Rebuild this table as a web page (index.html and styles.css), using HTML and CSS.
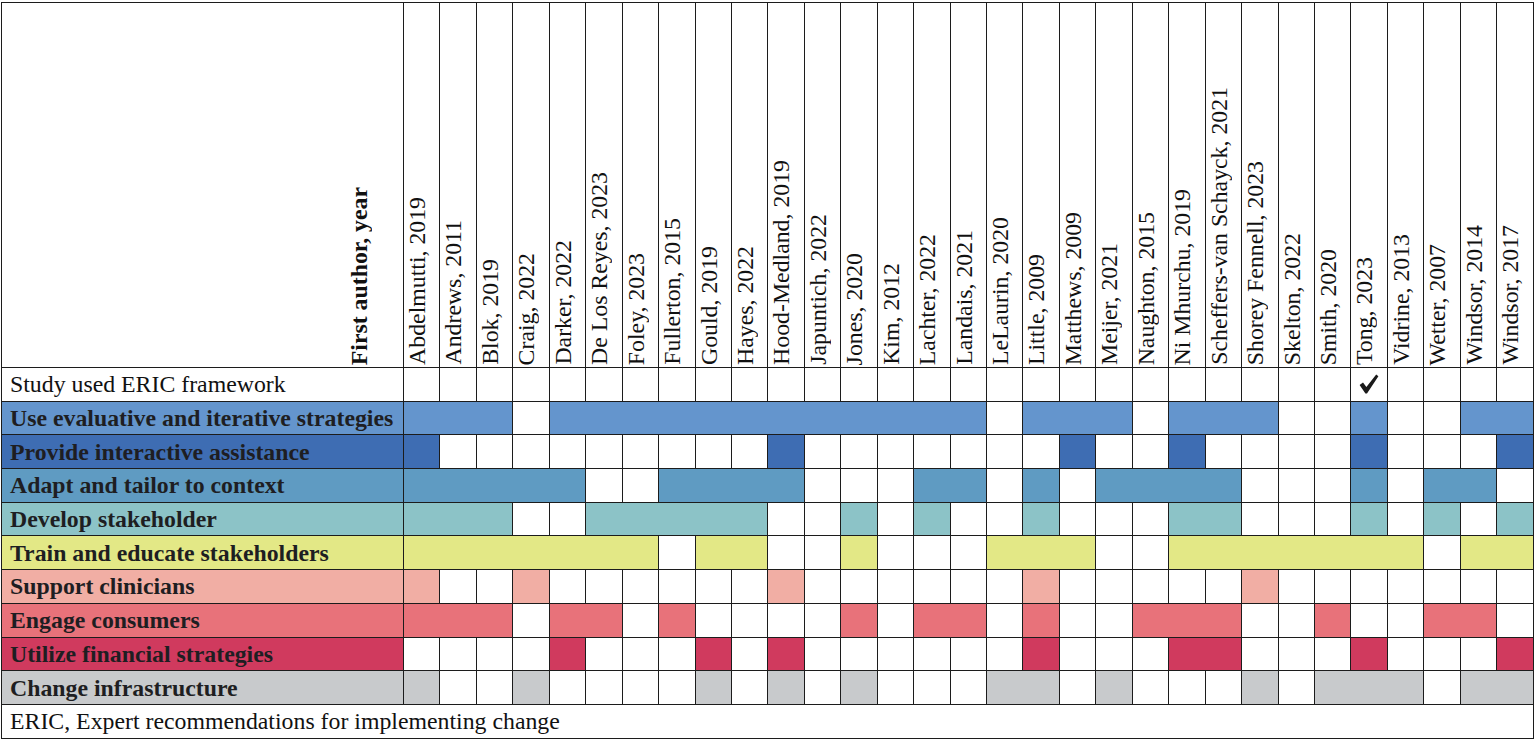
FILE: index.html
```html
<!DOCTYPE html>
<html lang="en">
<head>
<meta charset="utf-8">
<title>ERIC strategies by study</title>
<link rel="stylesheet" href="styles.css">
</head>
<body>
<table class="grid">
  <colgroup>
    <col class="c-label">
    <col class="c"><col class="c"><col class="c"><col class="c"><col class="c"><col class="c"><col class="c"><col class="c"><col class="c"><col class="c">
    <col class="c"><col class="c"><col class="c"><col class="c"><col class="c"><col class="c"><col class="c"><col class="c"><col class="c"><col class="c">
    <col class="c"><col class="c"><col class="c"><col class="c"><col class="c"><col class="c"><col class="c"><col class="c"><col class="c"><col class="c">
    <col class="c">
  </colgroup>
  <thead>
    <tr class="head-row">
      <th class="corner"><div class="vert bold">First author, year</div></th>
      <th><div class="vert">Abdelmutti, 2019</div></th>
      <th><div class="vert">Andrews, 2011</div></th>
      <th><div class="vert">Blok, 2019</div></th>
      <th><div class="vert">Craig, 2022</div></th>
      <th><div class="vert">Darker, 2022</div></th>
      <th><div class="vert">De Los Reyes, 2023</div></th>
      <th><div class="vert">Foley, 2023</div></th>
      <th><div class="vert">Fullerton, 2015</div></th>
      <th><div class="vert">Gould, 2019</div></th>
      <th><div class="vert">Hayes, 2022</div></th>
      <th><div class="vert">Hood-Medland, 2019</div></th>
      <th><div class="vert">Japuntich, 2022</div></th>
      <th><div class="vert">Jones, 2020</div></th>
      <th><div class="vert">Kim, 2012</div></th>
      <th><div class="vert">Lachter, 2022</div></th>
      <th><div class="vert">Landais, 2021</div></th>
      <th><div class="vert">LeLaurin, 2020</div></th>
      <th><div class="vert">Little, 2009</div></th>
      <th><div class="vert">Matthews, 2009</div></th>
      <th><div class="vert">Meijer, 2021</div></th>
      <th><div class="vert">Naughton, 2015</div></th>
      <th><div class="vert">Ni Mhurchu, 2019</div></th>
      <th><div class="vert">Scheffers-van Schayck, 2021</div></th>
      <th><div class="vert">Shorey Fennell, 2023</div></th>
      <th><div class="vert">Skelton, 2022</div></th>
      <th><div class="vert">Smith, 2020</div></th>
      <th><div class="vert">Tong, 2023</div></th>
      <th><div class="vert">Vidrine, 2013</div></th>
      <th><div class="vert">Wetter, 2007</div></th>
      <th><div class="vert">Windsor, 2014</div></th>
      <th><div class="vert">Windsor, 2017</div></th>
    </tr>
  </thead>
  <tbody>
    <tr class="row">
      <td class="label plain">Study used ERIC framework</td>
      <td></td><td></td><td></td><td></td><td></td><td></td><td></td><td></td><td></td><td></td>
      <td></td><td></td><td></td><td></td><td></td><td></td><td></td><td></td><td></td><td></td>
      <td></td><td></td><td></td><td></td><td></td><td></td>
      <td class="tick"><svg class="check" viewBox="0 0 20 20" aria-label="yes"><path d="M0.6 11 L4 8.6 L7.4 13 L17.2 0.6 L19.4 2.2 L8 19.4 L6.4 19.4 Z"/></svg></td>
      <td></td><td></td><td></td><td></td>
    </tr>
    <tr class="row eval">
      <td class="label f">Use evaluative and iterative strategies</td>
      <td class="f" colspan="3"></td><td></td>
      <td class="f" colspan="12"></td><td></td>
      <td class="f" colspan="3"></td><td></td>
      <td class="f" colspan="3"></td><td></td><td></td>
      <td class="f"></td><td></td><td></td>
      <td class="f" colspan="2"></td>
    </tr>
    <tr class="row assist">
      <td class="label f">Provide interactive assistance</td>
      <td class="f"></td><td></td><td></td><td></td><td></td><td></td><td></td><td></td><td></td><td></td>
      <td class="f"></td><td></td><td></td><td></td><td></td><td></td><td></td><td></td>
      <td class="f"></td><td></td><td></td>
      <td class="f"></td><td></td><td></td><td></td><td></td>
      <td class="f"></td><td></td><td></td><td></td>
      <td class="f"></td>
    </tr>
    <tr class="row adapt">
      <td class="label f">Adapt and tailor to context</td>
      <td class="f" colspan="5"></td><td></td><td></td>
      <td class="f" colspan="4"></td><td></td><td></td><td></td>
      <td class="f" colspan="2"></td><td></td>
      <td class="f"></td><td></td>
      <td class="f" colspan="4"></td><td></td><td></td><td></td>
      <td class="f"></td><td></td>
      <td class="f" colspan="2"></td><td></td>
    </tr>
    <tr class="row develop">
      <td class="label f">Develop stakeholder</td>
      <td class="f" colspan="3"></td><td></td><td></td>
      <td class="f" colspan="5"></td><td></td><td></td>
      <td class="f"></td><td></td>
      <td class="f"></td><td></td><td></td>
      <td class="f"></td><td></td><td></td><td></td>
      <td class="f" colspan="2"></td><td></td><td></td><td></td>
      <td class="f"></td><td></td>
      <td class="f"></td><td></td>
      <td class="f"></td>
    </tr>
    <tr class="row train">
      <td class="label f">Train and educate stakeholders</td>
      <td class="f" colspan="7"></td><td></td>
      <td class="f" colspan="2"></td><td></td><td></td>
      <td class="f"></td><td></td><td></td><td></td>
      <td class="f" colspan="3"></td><td></td><td></td>
      <td class="f" colspan="7"></td><td></td>
      <td class="f" colspan="2"></td>
    </tr>
    <tr class="row support">
      <td class="label f">Support clinicians</td>
      <td class="f"></td><td></td><td></td>
      <td class="f"></td><td></td><td></td><td></td><td></td><td></td><td></td>
      <td class="f"></td><td></td><td></td><td></td><td></td><td></td><td></td>
      <td class="f"></td><td></td><td></td><td></td><td></td><td></td>
      <td class="f"></td><td></td><td></td><td></td><td></td><td></td><td></td><td></td>
    </tr>
    <tr class="row engage">
      <td class="label f">Engage consumers</td>
      <td class="f" colspan="3"></td><td></td>
      <td class="f" colspan="2"></td><td></td>
      <td class="f"></td><td></td><td></td><td></td><td></td>
      <td class="f"></td><td></td>
      <td class="f" colspan="2"></td><td></td>
      <td class="f"></td><td></td><td></td>
      <td class="f" colspan="3"></td><td></td><td></td>
      <td class="f"></td><td></td><td></td>
      <td class="f" colspan="2"></td><td></td>
    </tr>
    <tr class="row finance">
      <td class="label f">Utilize financial strategies</td>
      <td></td><td></td><td></td><td></td>
      <td class="f"></td><td></td><td></td><td></td>
      <td class="f"></td><td></td>
      <td class="f"></td><td></td><td></td><td></td><td></td><td></td><td></td>
      <td class="f"></td><td></td><td></td><td></td>
      <td class="f" colspan="2"></td><td></td><td></td><td></td>
      <td class="f"></td><td></td><td></td><td></td>
      <td class="f"></td>
    </tr>
    <tr class="row infra">
      <td class="label f">Change infrastructure</td>
      <td class="f"></td><td></td><td></td>
      <td class="f"></td><td></td><td></td><td></td><td></td>
      <td class="f"></td><td></td>
      <td class="f"></td><td></td>
      <td class="f"></td><td></td><td></td><td></td>
      <td class="f" colspan="2"></td><td></td>
      <td class="f"></td><td></td><td></td><td></td>
      <td class="f"></td><td></td>
      <td class="f" colspan="3"></td><td></td>
      <td class="f" colspan="2"></td>
    </tr>
    <tr class="row foot">
      <td class="label plain" colspan="32">ERIC, Expert recommendations for implementing change</td>
    </tr>
  </tbody>
</table>
</body>
</html>
```

FILE: styles.css
```css
html, body {
  margin: 0;
  padding: 0;
  background: #ffffff;
}

body {
  font-family: "Liberation Serif", "Times New Roman", serif;
  font-size: 23.8px;
  color: #111111;
}

.grid {
  border-collapse: collapse;
  table-layout: fixed;
  width: 1532px;
  margin: 2px 0 0 1px;
}

.c-label { width: 402px; }
.c { width: 36.45px; }

.grid th,
.grid td {
  border: 1px solid #1c1c1c;
  padding: 0;
}

.head-row { height: 365px; }

.grid .head-row th {
  vertical-align: bottom;
  text-align: left;
  font-weight: normal;
  padding: 0 0 2px 0;
}

.grid .head-row th.corner {
  padding-right: 31px;
}

.vert {
  display: block;
  writing-mode: vertical-rl;
  transform: rotate(180deg);
  white-space: nowrap;
  line-height: 26px;
}

.corner .vert {
  margin-left: auto;
}

.bold { font-weight: bold; }

.row { height: 33.7px; }

.grid .label {
  text-align: left;
  white-space: nowrap;
  overflow: hidden;
  padding-left: 8px;
  font-weight: bold;
  color: #1e1e22;
  line-height: 26px;
}

.grid .label.plain {
  font-weight: normal;
  color: #111111;
}

.tick {
  text-align: center;
  vertical-align: middle;
}

.check {
  width: 20px;
  height: 20px;
  display: block;
  margin: 0 auto;
  fill: #1a1a1a;
}

.eval .f    { background: #6495cd; }
.assist .f  { background: #3e6db3; }
.adapt .f   { background: #5f9bc2; }
.develop .f { background: #8cc3c7; }
.train .f   { background: #e3e886; }
.support .f { background: #f1aea4; }
.engage .f  { background: #e8727a; }
.finance .f { background: #d03a5e; }
.infra .f   { background: #c8cacc; }
```
